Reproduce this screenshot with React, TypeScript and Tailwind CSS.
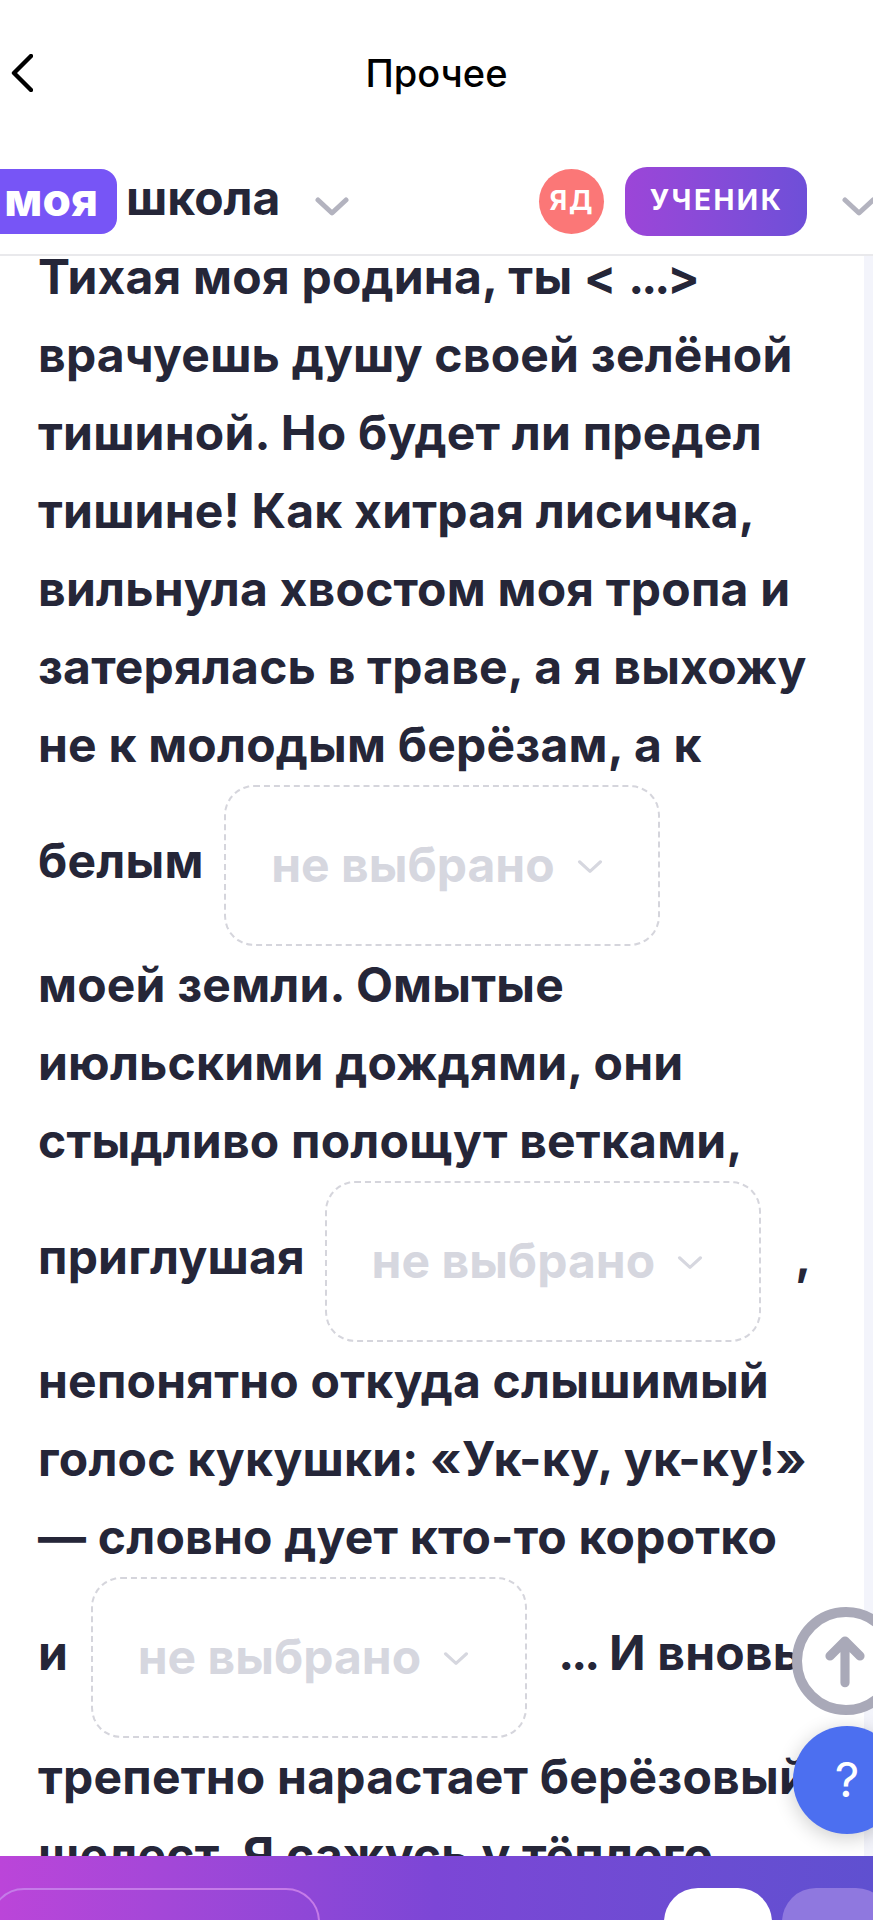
import React from "react";

const Chevron = ({ className }: { className: string }) => (
  <svg viewBox="0 0 34 20" fill="none" className={className}>
    <path d="M3 3 L17 16 L31 3" stroke="currentColor" strokeWidth="5" strokeLinecap="round" strokeLinejoin="round" />
  </svg>
);

const Select = ({ className = "" }: { className?: string }) => (
  <span className={`my-[0.5px] inline-flex h-[161px] w-[436px] items-center rounded-[30px] border-2 border-dashed border-[#d5d5dc] pl-[45px] align-middle tracking-normal text-[#d6d7df] ${className}`}>
    <span>не выбрано</span>
    <svg viewBox="0 0 28 16" fill="none" className="ml-[22px] mt-1 h-[14px] w-[26px] text-[#d6d7df]">
      <path d="M2 2 L14 13 L26 2" stroke="currentColor" strokeWidth="3.5" strokeLinecap="round" strokeLinejoin="round" />
    </svg>
  </span>
);

export default function App() {
  return (
    <div className="relative flex h-[1920px] w-[873px] flex-col overflow-hidden bg-white font-['Inter',sans-serif] text-[#252638]">
      <header className="relative flex h-[146px] items-center justify-center text-[38px] font-medium text-black">
        <svg viewBox="0 0 22 38" fill="none" className="absolute left-[11px] top-[54px] h-[38px] w-[22px]">
          <path d="M20 2 L3 19 L20 36" stroke="#000" strokeWidth="4.4" strokeLinecap="round" strokeLinejoin="round" />
        </svg>
        <span>Прочее</span>
      </header>

      <div className="flex h-[110px] shrink-0 items-start border-b-2 border-[#e9e9ec] pt-[23px]">
        <span className="flex h-[65px] w-[117px] shrink-0 items-center justify-end rounded-r-[16px] bg-[#7755f6] pb-[4px] pr-[19px] text-[46px] font-extrabold text-white">моя</span>
        <span className="ml-[9px] -mt-[3px] text-[48px] leading-[63px] font-bold">школа</span>
        <Chevron className="ml-[35px] mt-[28px] h-[20px] w-[34px] shrink-0 text-[#b3b3bf]" />
        <span className="ml-[190px] flex h-[65px] w-[65px] shrink-0 items-center justify-center rounded-full bg-[#fb7777] text-[27px] font-bold tracking-[2px] text-white">ЯД</span>
        <span className="ml-[21px] -mt-[2px] flex h-[69px] w-[182px] shrink-0 items-center justify-center rounded-[22px] bg-gradient-to-r from-[#9c45d8] to-[#6e4fd8] pb-[3px] text-[28px] font-bold tracking-[2.5px] text-white">УЧЕНИК</span>
        <Chevron className="ml-[35px] mt-[28px] h-[20px] w-[34px] shrink-0 text-[#b3b3bf]" />
      </div>

      <main className="relative min-h-0 flex-1 overflow-hidden">
        <div className="absolute bottom-0 right-0 top-0 w-[9px] bg-[#f3f4fb]" />
        <p className="-mt-[18px] whitespace-nowrap pl-[38px] text-[48px] leading-[78px] font-bold tracking-[0.2px]">
          Тихая моя родина, ты &lt; <span className="tracking-[-3px]">...</span>&gt;<br />
          врачуешь душу своей зелёной<br />
          тишиной. Но будет ли предел<br />
          тишине! Как хитрая лисичка,<br />
          вильнула хвостом моя тропа и<br />
          затерялась в траве, а я выхожу<br />
          не к молодым берёзам, а к<br />
          белым <Select className="ml-[9px]" /><br />
          моей земли. Омытые<br />
          июльскими дождями, они<br />
          стыдливо полощут ветками,<br />
          приглушая <Select className="ml-[8px]" /> <span className="ml-[23px]">,</span><br />
          непонятно откуда слышимый<br />
          голос кукушки: «Ук-ку, ук-ку!»<br />
          — словно дует кто-то коротко<br />
          и <Select className="ml-[11px]" /> <span className="ml-[20px] tracking-[-3px]">...</span> И вновь<br />
          трепетно нарастает берёзовый<br />
          шелест. Я сажусь у тёплого
        </p>
      </main>

      <div className="absolute left-[792px] top-[1607px] flex h-[108px] w-[108px] items-center justify-center rounded-full border-[10px] border-[#a9a9b8] bg-white">
        <svg viewBox="0 0 48 64" fill="none" className="mr-[2px] h-[58px] w-[40px]">
          <path d="M24 58 V8 M6 26 L24 8 L42 26" stroke="#a9a9b8" strokeWidth="11" strokeLinecap="round" strokeLinejoin="round" />
        </svg>
      </div>
      <div className="absolute left-[793px] top-[1726px] flex h-[108px] w-[108px] items-center justify-center rounded-full bg-[#4c6ff0] text-[48px] font-normal text-white shadow-[0_4px_20px_rgba(0,0,0,0.2)]">?</div>

      <footer className="relative h-[64px] shrink-0 overflow-hidden bg-gradient-to-r from-[#bb45d9] via-[#7c46d6] to-[#5f50d0]">
        <div className="absolute -left-[10px] top-[32px] h-[80px] w-[330px] rounded-t-[34px] border-2 border-[#c57be8]" />
        <div className="absolute left-[664px] top-[32px] h-[80px] w-[108px] rounded-t-[34px] bg-white" />
        <div className="absolute left-[782px] top-[32px] h-[80px] w-[108px] rounded-t-[34px] bg-[#8f78df]" />
      </footer>
    </div>
  );
}
